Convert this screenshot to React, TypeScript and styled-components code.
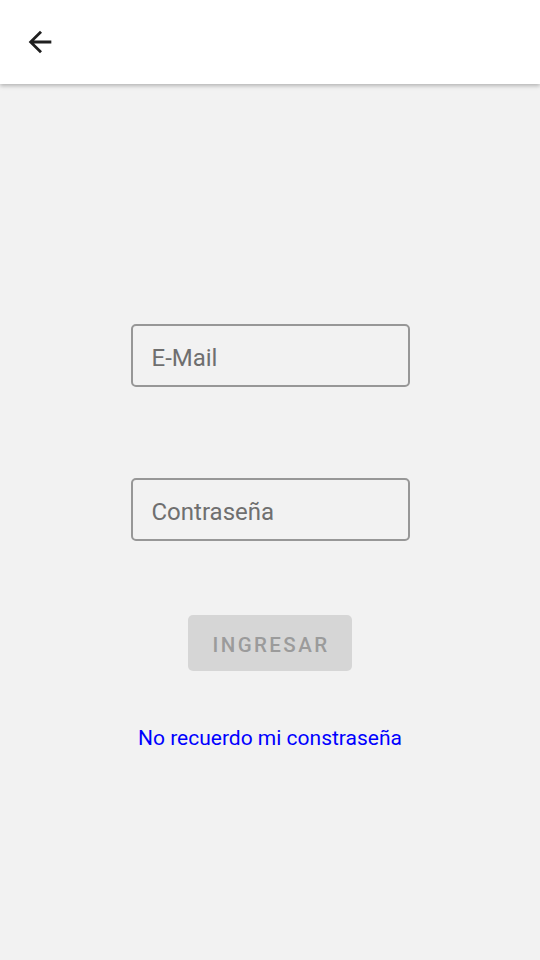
import React from "react";
import styled, { createGlobalStyle } from "styled-components";

const Global = createGlobalStyle`
  html, body { margin: 0; padding: 0; background: #f2f2f2; }
  body { font-family: Roboto, "Noto Sans", Arial, sans-serif; }
  * { box-sizing: border-box; }
`;

const Page = styled.div`
  width: 540px;
  min-height: 960px;
  background: #f2f2f2;
  display: flex;
  flex-direction: column;
`;

const Header = styled.header`
  height: 84px;
  background: #ffffff;
  box-shadow: 0 2px 4px rgba(0, 0, 0, 0.25);
  display: flex;
  align-items: center;
  padding-left: 23px;
  position: relative;
  z-index: 1;
`;

const BackButton = styled.button`
  border: none;
  background: transparent;
  padding: 0;
  width: 34px;
  height: 34px;
  display: flex;
  align-items: center;
  justify-content: center;
  color: #1f1f1f;
  cursor: pointer;
`;

const Main = styled.main`
  display: flex;
  flex-direction: column;
  align-items: center;
  padding-top: 240px;
`;

const Field = styled.input<{ $gap?: number }>`
  width: 279px;
  height: 63px;
  border: 2px solid #979797;
  border-radius: 5px;
  background: transparent;
  padding: 4px 0 0 19px;
  margin-bottom: ${(p) => p.$gap ?? 0}px;
  font-family: Roboto, Arial, sans-serif;
  font-size: 24px;
  color: #333;
  outline: none;
  &::placeholder {
    color: #6f6f6f;
  }
`;

const SubmitButton = styled.button`
  width: 164px;
  height: 56px;
  border: none;
  border-radius: 5px;
  background: #d6d6d6;
  color: #9b9b9b;
  font-family: Roboto, Arial, sans-serif;
  font-weight: 500;
  font-size: 20.5px;
  letter-spacing: 2.4px;
  margin-bottom: 55px;
  padding: 4px 0 0 2px;
`;

const ForgotLink = styled.a`
  color: #0000ff;
  font-family: Roboto, Arial, sans-serif;
  font-size: 21px;
  line-height: 24px;
  text-decoration: none;
`;

export default function App() {
  return (
    <>
      <Global />
      <Page>
        <Header>
          <BackButton aria-label="Volver">
            <svg width="34" height="34" viewBox="0 0 24 24" fill="currentColor">
              <path d="M20 11H7.83l5.59-5.59L12 4l-8 8 8 8 1.41-1.41L7.83 13H20v-2z" />
            </svg>
          </BackButton>
        </Header>
        <Main>
          <Field placeholder="E-Mail" $gap={91} />
          <Field placeholder="Contraseña" type="password" $gap={74} />
          <SubmitButton disabled>INGRESAR</SubmitButton>
          <ForgotLink href="#">No recuerdo mi constraseña</ForgotLink>
        </Main>
      </Page>
    </>
  );
}
